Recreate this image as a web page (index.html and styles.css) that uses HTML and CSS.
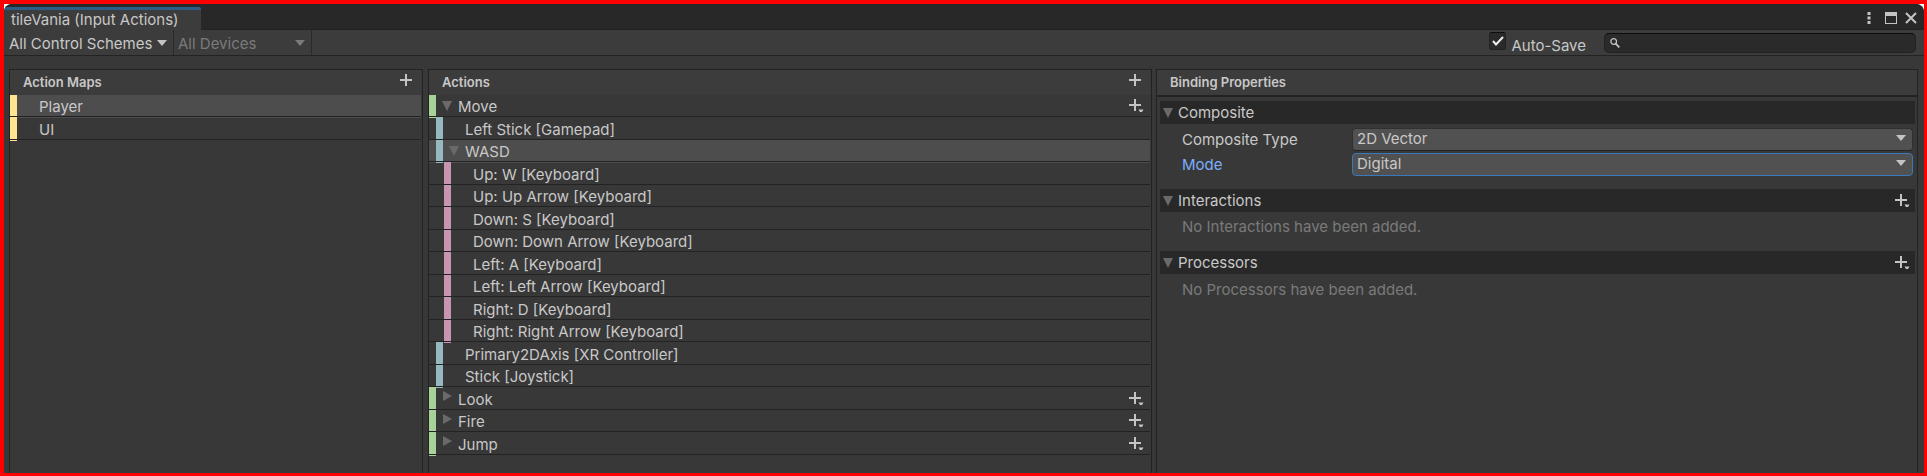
FILE: index.html
```html
<!DOCTYPE html>
<html lang="en">
<head>
<meta charset="utf-8">
<title>tileVania (Input Actions)</title>
<link rel="stylesheet" href="styles.css">
</head>
<body>
<svg class="defs" width="0" height="0" aria-hidden="true">
  <symbol id="plus" viewBox="0 0 16 13"><path d="M6 0h2v5h5v2H8v5H6V7H1V5h5z"/></symbol>
  <symbol id="plus-menu" viewBox="0 0 16 13"><path d="M6 0h2v5h5v2H8v5H6V7H1V5h5z"/><path d="M10.500 10.500h5l-1.500 2.500h-2z"/></symbol>
  <symbol id="down" viewBox="0 0 10 10"><path d="M0 0h10L5 10z"/></symbol>
  <symbol id="right" viewBox="0 0 10 10"><path d="M1 0l9 5-9 5z"/></symbol>
  <symbol id="caret" viewBox="0 0 10 6"><path d="M0 0h10L5 6z"/></symbol>
</svg>
<div class="window">
  <header class="titlebar">
    <h1 class="tab">tileVania (Input Actions)</h1>
    <div class="window-buttons">
      <button aria-label="Menu"><svg width="4" height="12" viewBox="0 0 4 12"><path d="M.5 0h3v3h-3zM.5 4.500h3v3h-3zM.5 9h3v3h-3z"/></svg></button>
      <button aria-label="Maximize"><svg width="12" height="12" viewBox="0 0 12 12"><path fill-rule="evenodd" d="M0 0h12v12H0zM1 4v7h10V4z"/></svg></button>
      <button aria-label="Close"><svg width="12" height="12" viewBox="0 0 12 12"><path d="M1 1l10 10M11 1L1 11" fill="none" stroke="#c4c4c4" stroke-width="2"/></svg></button>
    </div>
  </header>
  <div class="toolbar">
    <button class="menu schemes">All Control Schemes<svg width="10" height="6"><use href="#caret"/></svg></button>
    <button class="menu devices" disabled>All Devices<svg width="10" height="6"><use href="#caret"/></svg></button>
    <label class="autosave"><span class="check"><input type="checkbox" checked><svg width="12" height="10" viewBox="0 0 12 10"><path d="M1 5l3 3.500L11 1" fill="none" stroke="#eee" stroke-width="2"/></svg></span><span class="autosave-text">Auto-Save</span></label>
    <label class="search"><svg width="10" height="10" viewBox="0 0 10 10"><path d="M5.700 5.700L9.300 9.300" stroke="#c4c4c4" stroke-width="1.800"/><circle cx="3.700" cy="3.500" r="2.800" fill="none" stroke="#c4c4c4" stroke-width="1.300"/></svg><input type="text" aria-label="Search"></label>
  </div>
  <main class="panels">
    <section class="panel maps">
      <header class="panel-head"><h2>Action Maps</h2><button class="add" aria-label="Add action map"><svg width="16" height="13"><use href="#plus"/></svg></button></header>
      <ul class="rows">
        <li class="row map selected"><i class="strip"></i><span>Player</span></li>
        <li class="row map end"><i class="strip"></i><span>UI</span></li>
      </ul>
    </section>
    <section class="panel">
      <header class="panel-head"><h2>Actions</h2><button class="add" aria-label="Add action"><svg width="16" height="13"><use href="#plus"/></svg></button></header>
      <ul class="rows">
        <li class="row action end"><i class="strip"></i><button class="fold" aria-label="Collapse Move"><svg width="10" height="10"><use href="#down"/></svg></button><span>Move</span><button class="add" aria-label="Add binding to Move"><svg width="16" height="13"><use href="#plus-menu"/></svg></button></li>
        <li class="row binding"><i class="strip"></i><span>Left Stick [Gamepad]</span></li>
        <li class="row binding selected end"><i class="strip"></i><button class="fold" aria-label="Collapse WASD"><svg width="10" height="10"><use href="#down"/></svg></button><span>WASD</span></li>
        <li class="row part"><i class="strip"></i><span>Up: W [Keyboard]</span></li>
        <li class="row part"><i class="strip"></i><span>Up: Up Arrow [Keyboard]</span></li>
        <li class="row part"><i class="strip"></i><span>Down: S [Keyboard]</span></li>
        <li class="row part"><i class="strip"></i><span>Down: Down Arrow [Keyboard]</span></li>
        <li class="row part"><i class="strip"></i><span>Left: A [Keyboard]</span></li>
        <li class="row part"><i class="strip"></i><span>Left: Left Arrow [Keyboard]</span></li>
        <li class="row part"><i class="strip"></i><span>Right: D [Keyboard]</span></li>
        <li class="row part end"><i class="strip"></i><span>Right: Right Arrow [Keyboard]</span></li>
        <li class="row binding"><i class="strip"></i><span>Primary2DAxis [XR Controller]</span></li>
        <li class="row binding end"><i class="strip"></i><span>Stick [Joystick]</span></li>
        <li class="row action closed"><i class="strip"></i><button class="fold" aria-label="Expand Look"><svg width="10" height="10"><use href="#right"/></svg></button><span>Look</span><button class="add" aria-label="Add binding to Look"><svg width="16" height="13"><use href="#plus-menu"/></svg></button></li>
        <li class="row action closed"><i class="strip"></i><button class="fold" aria-label="Expand Fire"><svg width="10" height="10"><use href="#right"/></svg></button><span>Fire</span><button class="add" aria-label="Add binding to Fire"><svg width="16" height="13"><use href="#plus-menu"/></svg></button></li>
        <li class="row action closed end"><i class="strip"></i><button class="fold" aria-label="Expand Jump"><svg width="10" height="10"><use href="#right"/></svg></button><span>Jump</span><button class="add" aria-label="Add binding to Jump"><svg width="16" height="13"><use href="#plus-menu"/></svg></button></li>
      </ul>
    </section>
    <section class="panel properties">
      <header class="panel-head"><h2>Binding Properties</h2></header>
      <div class="sections">
        <section class="section">
          <h3><button class="fold" aria-label="Collapse Composite"><svg width="10" height="10"><use href="#down"/></svg></button><span>Composite</span></h3>
          <div class="fields">
            <label for="type">Composite Type</label>
            <div class="select"><select id="type"><option>2D Vector</option></select><svg width="10" height="6"><use href="#caret"/></svg></div>
            <label for="mode" class="active">Mode</label>
            <div class="select active"><select id="mode"><option>Digital</option></select><svg width="10" height="6"><use href="#caret"/></svg></div>
          </div>
        </section>
        <section class="section">
          <h3><button class="fold" aria-label="Collapse Interactions"><svg width="10" height="10"><use href="#down"/></svg></button><span>Interactions</span><button class="add" aria-label="Add interaction"><svg width="16" height="13"><use href="#plus-menu"/></svg></button></h3>
          <p>No Interactions have been added.</p>
        </section>
        <section class="section">
          <h3><button class="fold" aria-label="Collapse Processors"><svg width="10" height="10"><use href="#down"/></svg></button><span>Processors</span><button class="add" aria-label="Add processor"><svg width="16" height="13"><use href="#plus-menu"/></svg></button></h3>
          <p>No Processors have been added.</p>
        </section>
      </div>
    </section>
  </main>
</div>
</body>
</html>
```
FILE: styles.css
```css
* { box-sizing: border-box; }
body {
  margin: 0;
  min-height: 100vh;
  display: flex;
  border: solid #f00;
  border-width: 4px 3px 3px 4px;
  background: #fff;
  color: #c8c8c8;
  font: 15px/20px Inter, "Liberation Sans", sans-serif;
}
h1, h2, h3, p, ul { margin: 0; padding: 0; font: inherit; list-style: none; }
button, input, select { font: inherit; color: inherit; border: 0; margin: 0; padding: 0; background: none; }
svg { display: block; fill: #c4c4c4; flex: none; }
.defs { position: absolute; }

.window {
  flex: 1;
  display: flex;
  flex-direction: column;
  min-width: 0;
  background: #383838;
  border-radius: 8px 8px 0 0;
  overflow: hidden;
}
.titlebar {
  height: 26px;
  display: flex;
  align-items: flex-end;
  justify-content: space-between;
  background: #282828;
  box-shadow: inset 0 -1px #232323;
}
.tab {
  height: 23px;
  padding: 0 22px 0 7px;
  background: #3c3c3c;
  border-top: 3px solid #2c5d87;
  border-radius: 4px 2px 0 0;
  line-height: 20px;
}
.window-buttons { display: flex; align-items: center; gap: 8px; padding: 0 7px 6px 0; }
.window-buttons button:first-child { margin-right: 6px; }

.toolbar {
  height: 26px;
  display: flex;
  background: #3c3c3c;
  border-bottom: 1px solid #232323;
}
.menu {
  display: flex;
  align-items: center;
  justify-content: space-between;
  padding: 2px 6px 0 5px;
  border-right: 1px solid #2a2a2a;
}
.menu svg { margin-bottom: 2px; }
.schemes { width: 170px; }
.devices { width: 138px; padding-left: 4px; color: #7a7a7a; }
.devices svg { fill: #7a7a7a; }
.autosave { display: flex; align-items: flex-start; gap: 5px; margin-left: auto; padding-top: 2px; }
.check { position: relative; }
.check input {
  display: block;
  width: 17px;
  height: 18px;
  appearance: none;
  background: #2a2a2a;
  border: 1px solid #212121;
  border-top-color: #0d0d0d;
  border-radius: 3px;
}
.check svg { position: absolute; left: 3px; top: 4px; pointer-events: none; }
.autosave-text { padding-top: 4px; line-height: 20px; }
.search {
  display: flex;
  align-items: center;
  gap: 6px;
  width: 312px;
  height: 20px;
  margin: 3px 8px 0 18px;
  padding: 0 5px;
  background: #2a2a2a;
  border: 1px solid #212121;
  border-top-color: #0d0d0d;
  border-radius: 5px;
}
.search input { flex: 1; min-width: 0; outline: 0; }

.panels {
  flex: 1;
  display: grid;
  grid-template-columns: 415fr 724fr 762fr;
  gap: 4px;
  padding: 13px 6px 0 5px;
}
.panel { min-width: 0; border: solid #232323; border-width: 1px 1px 0; padding-right: 1px; }
.maps { margin-right: 1px; }
.panel-head {
  height: 25px;
  display: flex;
  align-items: center;
  justify-content: space-between;
  padding: 0 6px 0 13px;
  background: #3c3c3c;
}
.panel-head h2 { padding-bottom: 2px; font-size: 13px; font-weight: 600; }
.panel-head .add { padding-bottom: 4px; }

.row {
  display: flex;
  align-items: center;
  height: 22px;
  padding-right: 6px;
  border-bottom: 1px solid #232323;
}
.row:nth-child(even) { height: 23px; }
.row.selected { background: #4d4d4d; box-shadow: 0 1px #4d4d4d; }
.strip { position: relative; align-self: stretch; flex: none; width: 7px; background: var(--strip); background-clip: content-box; }
.end .strip::after { content: ""; position: absolute; left: 0; bottom: -2px; width: 100%; height: 1px; background: var(--strip); }
.row span { padding-top: 3px; }
.row:nth-child(even) span { padding-top: 4px; }
.row .add { margin-left: auto; }
.fold { margin: 0 6px; }
.fold svg { fill: #6a6a6a; }
.closed .fold { padding-bottom: 4px; }
.map { --strip: #ffe58f; }
.action { --strip: #a9d29a; }
.binding { --strip: #95b9bf; padding-left: 7px; }
.part { --strip: #c795b0; padding-left: 15px; }
.strip + span { margin-left: 22px; }

.properties { padding-right: 0; }
.properties .panel-head { height: 27px; border-bottom: 2px solid #232323; }
.sections { display: flex; flex-direction: column; gap: 13px; padding: 4px 2px 0 3px; }
.section h3 {
  display: flex;
  align-items: center;
  height: 23px;
  padding: 0 5px 0 3px;
  background: #282828;
}
.section .fold { margin: 0 5px 0 0; }
.section .add { margin-left: auto; }
.section p { padding: 5px 22px 1px; color: #7a7a7a; }
.section:last-child p { padding-top: 6px; }
.fields {
  display: grid;
  grid-template-columns: 170px 1fr;
  row-gap: 2px;
  padding: 4px 2px 0 22px;
}
.fields label { padding-top: 2px; }
.fields label.active { color: #7baefa; }
.select { position: relative; height: 23px; }
.select select {
  width: 100%;
  height: 23px;
  padding: 0 24px 2px 4px;
  appearance: none;
  background: #515151;
  border: 1px solid #303030;
  border-bottom-color: #242424;
  border-radius: 4px;
  outline: 0;
}
.select.active select { border-color: #3a79bb; }
.select svg { position: absolute; right: 7px; top: 7px; pointer-events: none; }
```
